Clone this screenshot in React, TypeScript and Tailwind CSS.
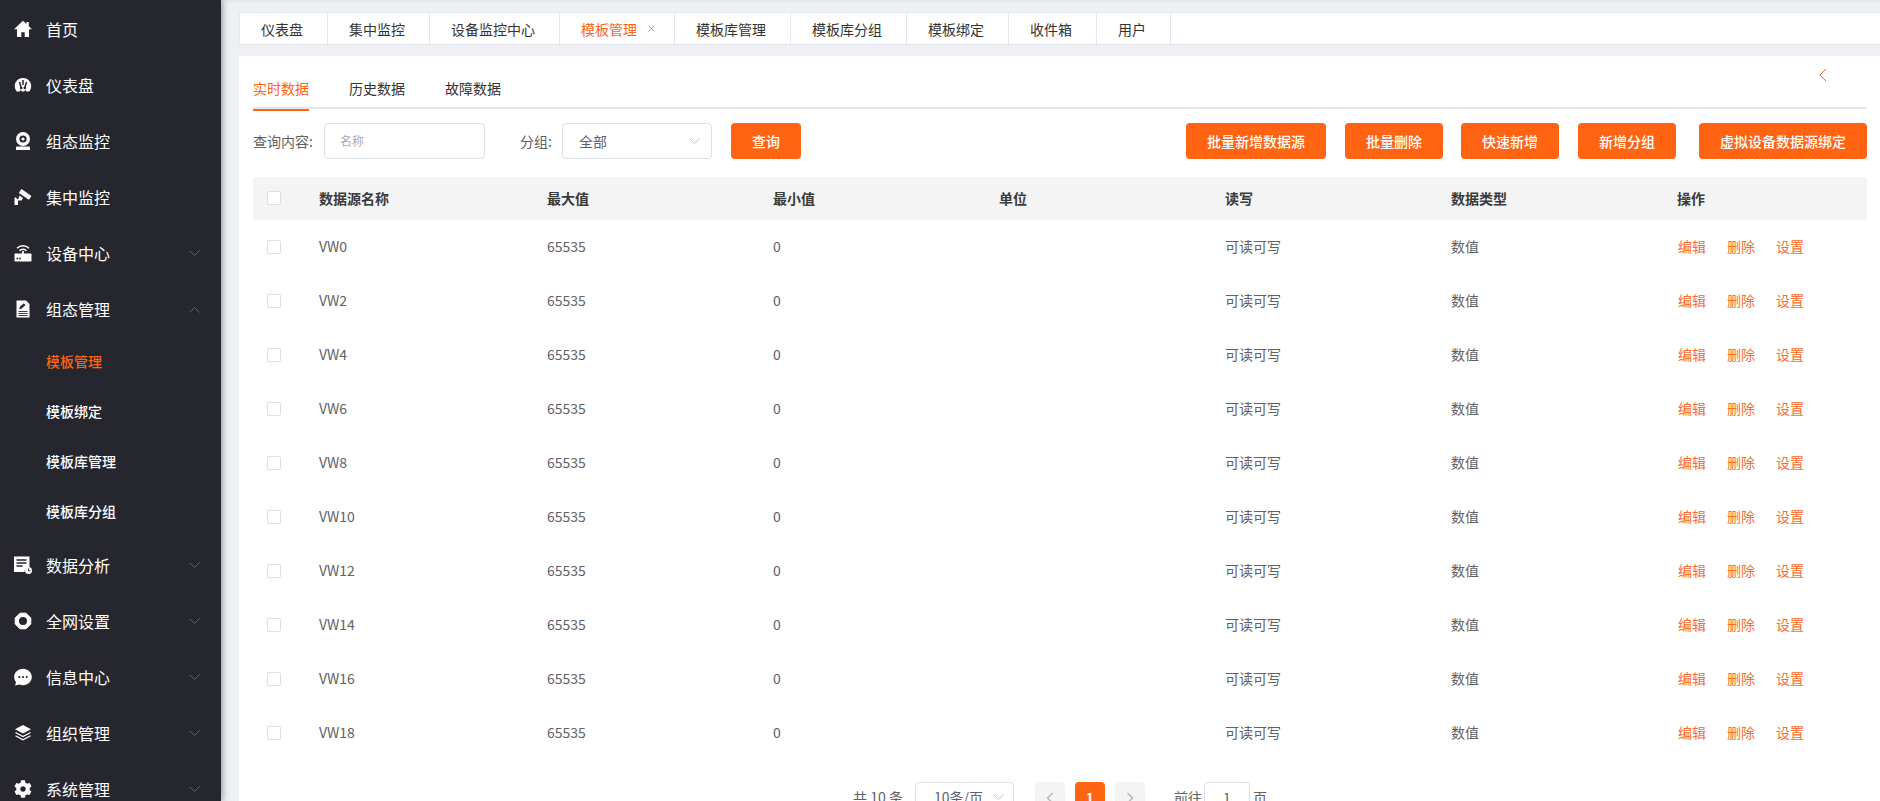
import type { ReactNode } from "react";
import { FaCog } from "react-icons/fa";

const DARK = "#26262e";

const Svg = ({ children }: { children: ReactNode }) => (
  <svg width="18" height="18" viewBox="0 0 18 18" fill="white">
    {children}
  </svg>
);

const HomeIcon = () => (
  <Svg>
    <path d="M9 .800 0 9.200h3V17h4.300v-4.800h3.400V17H15V9.200h3l-3.200-3V2h-2.300v2.100z" />
  </Svg>
);

const GaugeIcon = () => (
  <Svg>
    <path d="M9 2C4.600 2 .8 5.500 .8 10c0 2.200 .7 4 2 5.500h2.900l1.200-1.800 .8 1.800h2.600l.8-1.800 1.200 1.800h2.900c1.300-1.500 2-3.300 2-5.500C17.200 5.500 13.400 2 9 2z" />
    <path d="M5.500 6 7 11M12.500 6 11 11M9 4v5" stroke={DARK} strokeWidth="1.500" />
    <circle cx="7.200" cy="12" r="1.300" fill={DARK} />
    <circle cx="10.800" cy="12" r="1.300" fill={DARK} />
  </Svg>
);

const WebcamIcon = () => (
  <Svg>
    <circle cx="9" cy="7" r="7" />
    <circle cx="9" cy="7" r="3.600" fill={DARK} />
    <circle cx="9" cy="7" r="1.600" />
    <path d="M3 14.600h12a1 1 0 0 1 1 1V18H2v-2.400a1 1 0 0 1 1-1z" />
  </Svg>
);

const CctvIcon = () => (
  <Svg>
    <path d="M7.500 1 17.500 8l-2.600 3.800L4.800 5z" />
    <path d="M5.500 7.500 9 10l-1.500 2.500H4V17H.5v-7.500h2v1.500h1.800z" />
  </Svg>
);

const RouterIcon = () => (
  <Svg>
    <rect x=".5" y="9.500" width="17" height="8" rx=".8" />
    <circle cx="3.300" cy="14.500" r=".9" fill={DARK} />
    <circle cx="6" cy="14.500" r=".9" fill={DARK} />
    <path d="M3 4.200A8.500 8.500 0 0 1 15 4.200M5.500 6.800A5 5 0 0 1 12.500 6.800" fill="none" stroke="white" strokeWidth="1.500" />
    <path d="M8.200 8h1.600v2H8.200z" />
    <circle cx="9" cy="8" r="1.100" />
  </Svg>
);

const DocPenIcon = () => (
  <Svg>
    <path d="M2.500 .500h9.500l3.500 3.500v13.500h-13z" />
    <path d="M4.500 11.500h9M4.500 13.500h9M4.500 15.500h9" stroke={DARK} strokeWidth=".9" />
    <path d="M5 9.500l1-2.800 3.800-3.400 1.700 1.700-3.800 3.500z" fill={DARK} />
  </Svg>
);

const DocClockIcon = () => (
  <Svg>
    <path d="M0 .500h15.500V11a5 5 0 0 0-5 5H0z" />
    <path d="M2.500 4h10M2.500 7h10M2.500 10h6" stroke={DARK} strokeWidth="1.300" />
    <circle cx="14.500" cy="14.500" r="3.500" />
    <path d="M14.500 12.500v2.300h2" stroke={DARK} strokeWidth=".9" fill="none" />
  </Svg>
);

const NutIcon = () => (
  <Svg>
    <path d="M6 1.200h6l4.800 4.800v6l-4.800 4.800H6L1.200 12V6z" stroke="white" strokeWidth="1" strokeLinejoin="round" />
    <circle cx="9" cy="9" r="4" fill={DARK} />
  </Svg>
);

const ChatIcon = () => (
  <Svg>
    <path d="M9 .800C4.100 .800 .2 4.400 .2 9c0 1.900 .7 3.600 1.800 5l-.9 3.400 4.200-.8c1.100 .4 2.400 .6 3.700 .6 4.900 0 8.800-3.600 8.800-8.200S13.900 .8 9 .8z" />
    <circle cx="5.300" cy="9" r="1.100" fill={DARK} />
    <circle cx="9" cy="9" r="1.100" fill={DARK} />
    <circle cx="12.700" cy="9" r="1.100" fill={DARK} />
  </Svg>
);

const LayersIcon = () => (
  <Svg>
    <path d="M9 1l8 4.300-8 4.300-8-4.300z" />
    <path d="M1.500 8.500 9 12.500l7.500-4M1.500 11.800 9 15.800l7.500-4" fill="none" stroke="white" strokeWidth="1.300" />
  </Svg>
);

type Nav = { label: string; icon: ReactNode; arrow?: "up" | "down" };

const topNav: Nav[] = [
  { label: "首页", icon: <HomeIcon /> },
  { label: "仪表盘", icon: <GaugeIcon /> },
  { label: "组态监控", icon: <WebcamIcon /> },
  { label: "集中监控", icon: <CctvIcon /> },
  { label: "设备中心", icon: <RouterIcon />, arrow: "down" },
  { label: "组态管理", icon: <DocPenIcon />, arrow: "up" },
];

const bottomNav: Nav[] = [
  { label: "数据分析", icon: <DocClockIcon />, arrow: "down" },
  { label: "全网设置", icon: <NutIcon />, arrow: "down" },
  { label: "信息中心", icon: <ChatIcon />, arrow: "down" },
  { label: "组织管理", icon: <LayersIcon />, arrow: "down" },
  { label: "系统管理", icon: <FaCog size={18} color="white" />, arrow: "down" },
];

const subNav = ["模板管理", "模板绑定", "模板库管理", "模板库分组"];

const tabs = ["仪表盘", "集中监控", "设备监控中心", "模板管理", "模板库管理", "模板库分组", "模板绑定", "收件箱", "用户"];

const columns = ["数据源名称", "最大值", "最小值", "单位", "读写", "数据类型", "操作"];

const rows = ["VW0", "VW2", "VW4", "VW6", "VW8", "VW10", "VW12", "VW14", "VW16", "VW18"];

const gridCols = "grid grid-cols-[66px_228px_226px_226px_226px_226px_226px_190px] items-center";

const Chevron = ({ up, color = "#5f6068" }: { up?: boolean; color?: string }) => (
  <svg width="11" height="7" viewBox="0 0 11 7" fill="none" stroke={color} strokeWidth="1" className={up ? "rotate-180" : ""}>
    <polyline points="0.500,0.500 5.500,5.500 10.500,0.500" />
  </svg>
);

const NavItem = ({ item }: { item: Nav }) => (
  <div className="flex h-[56px] items-center text-base text-white">
    <span className="flex w-[46px] justify-center">{item.icon}</span>
    <span className="flex-1">{item.label}</span>
    {item.arrow && (
      <span className="pr-[21px]">
        <Chevron up={item.arrow === "up"} />
      </span>
    )}
  </div>
);

const Sidebar = () => (
  <aside className="z-10 h-full w-[221px] shrink-0 bg-[#26262e] pt-px shadow-[2px_0_6px_rgba(0,21,41,0.35)]">
    {topNav.map(item => (
      <NavItem key={item.label} item={item} />
    ))}
    <div className="-mt-px pb-px">
      {subNav.map((label, i) => (
        <div
          key={label}
          className={`flex h-[50px] items-center pl-[46px] text-sm font-medium ${i === 0 ? "text-[#ff6412]" : "text-white"}`}
        >
          {label}
        </div>
      ))}
    </div>
    {bottomNav.map(item => (
      <NavItem key={item.label} item={item} />
    ))}
  </aside>
);

const TabBar = () => (
  <div className="mt-[9px] ml-[18px] flex h-[33px] border-y border-[#e4e7ed] bg-white text-sm text-[#333]">
    <div className="flex border-l border-[#e4e7ed]">
      {tabs.map(tab => (
        <div
          key={tab}
          className={`flex items-center border-r border-[#e4e7ed] pr-[24px] pl-[21px] ${tab === "模板管理" ? "text-[#ff6412]" : ""}`}
        >
          {tab}
          {tab === "模板管理" && (
            <svg width="7" height="7" viewBox="0 0 7 7" stroke="#ff7a3d" strokeWidth="0.900" className="mr-[-5px] ml-[11px]">
              <path d="M.5 .5l6 6M6.500 .5l-6 6" />
            </svg>
          )}
        </div>
      ))}
    </div>
  </div>
);

const Filters = () => (
  <div className="mt-[14px] flex h-[36px] items-center text-sm text-[#606266]">
    <span className="w-[71px]">查询内容:</span>
    <div className="flex h-full w-[161px] items-center rounded border border-[#dcdfe6] pl-[15px] text-xs text-[#a8abb2]">名称</div>
    <span className="ml-[35px] w-[42px]">分组:</span>
    <div className="flex h-full w-[150px] items-center justify-between rounded border border-[#dcdfe6] pr-[11px] pl-[16px]">
      全部
      <Chevron color="#c0c4cc" />
    </div>
    <button className="ml-[19px] h-full w-[70px] rounded bg-[#ff6412] font-medium text-white">查询</button>
    <div className="ml-auto flex h-full">
      <button className="h-full w-[140px] rounded bg-[#ff6412] font-medium text-white">批量新增数据源</button>
      <button className="ml-[19px] h-full w-[98px] rounded bg-[#ff6412] font-medium text-white">批量删除</button>
      <button className="ml-[18px] h-full w-[98px] rounded bg-[#ff6412] font-medium text-white">快速新增</button>
      <button className="ml-[19px] h-full w-[98px] rounded bg-[#ff6412] font-medium text-white">新增分组</button>
      <button className="ml-[23px] h-full w-[168px] rounded bg-[#ff6412] font-medium text-white">虚拟设备数据源绑定</button>
    </div>
  </div>
);

const Checkbox = () => <span className="ml-[14px] block h-[14px] w-[14px] rounded-[2px] border border-[#dcdfe6] bg-white" />;

const DataTable = () => (
  <div className="mt-[18px] text-sm">
    <div className={`${gridCols} h-[43px] bg-[#f4f4f5] pb-[2px] font-bold text-[#3a3a3a]`}>
      <Checkbox />
      {columns.map(col => (
        <span key={col}>{col}</span>
      ))}
    </div>
    {rows.map(name => (
      <div key={name} className={`${gridCols} h-[54px] text-[#606266] [&>span:not(:first-child)]:pb-[2px]`}>
        <Checkbox />
        <span>{name}</span>
        <span>65535</span>
        <span>0</span>
        <span />
        <span>可读可写</span>
        <span>数值</span>
        <span className="flex gap-[21px] pl-px text-[#ff6a2b]">
          <span>编辑</span>
          <span>删除</span>
          <span>设置</span>
        </span>
      </div>
    ))}
  </div>
);

const Pagination = () => (
  <div className="mt-[22px] flex h-[32px] items-center justify-center text-sm text-[#606266]">
    <span className="pb-[2px]">共 10 条</span>
    <div className="ml-[12px] flex h-[32px] w-[99px] items-center justify-between rounded border border-[#dcdfe6] pr-[9px] pb-[2px] pl-[18px]">
      10条/页
      <Chevron color="#c0c4cc" />
    </div>
    <div className="ml-[21px] flex h-[32px] w-[30px] items-center justify-center rounded-sm bg-[#f4f4f5]">
      <svg width="8" height="12" viewBox="0 0 8 12" fill="none" stroke="#b4b9c4" strokeWidth="1.500">
        <polyline points="6.500,1 1.500,6 6.500,11" />
      </svg>
    </div>
    <div className="ml-[10px] flex h-[32px] w-[30px] items-center justify-center rounded-sm bg-[#ff6412] pb-[2px] font-bold text-white">1</div>
    <div className="ml-[10px] flex h-[32px] w-[30px] items-center justify-center rounded-sm bg-[#f4f4f5]">
      <svg width="8" height="12" viewBox="0 0 8 12" fill="none" stroke="#b4b9c4" strokeWidth="1.500">
        <polyline points="1.500,1 6.500,6 1.500,11" />
      </svg>
    </div>
    <span className="ml-[29px] pb-[2px]">前往</span>
    <div className="ml-[2px] flex h-[32px] w-[46px] items-center justify-center rounded border border-[#dcdfe6] pb-[2px]">1</div>
    <span className="ml-[3px] pb-[2px]">页</span>
  </div>
);

export default function App() {
  return (
    <div className="flex h-[801px] w-full overflow-hidden bg-[#eff0f4] font-['Noto_Sans_CJK_SC','Noto_Sans',sans-serif]">
      <Sidebar />
      <main className="min-w-0 flex-1">
        <div className="h-[3px] bg-[#e7e8eb]" />
        <TabBar />
        <section className="mt-[11px] ml-[18px] h-[745px] bg-white pr-[13px] pl-[14px]">
          <div className="relative flex h-[53px] gap-[40px] border-b-2 border-[#e4e7ed] pt-[22px] text-sm text-[#333]">
            <span className="relative h-[31px] text-[#ff6412] after:absolute after:right-0 after:bottom-0 after:left-0 after:h-[2px] after:translate-y-[2px] after:bg-[#ff6412]">实时数据</span>
            <span>历史数据</span>
            <span>故障数据</span>
            <svg width="8" height="14" viewBox="0 0 8 14" fill="none" stroke="#e8622a" strokeWidth="1" className="absolute top-[12px] right-[40px]">
              <polyline points="7,1 1,7 7,13" />
            </svg>
          </div>
          <Filters />
          <DataTable />
          <Pagination />
        </section>
      </main>
    </div>
  );
}
